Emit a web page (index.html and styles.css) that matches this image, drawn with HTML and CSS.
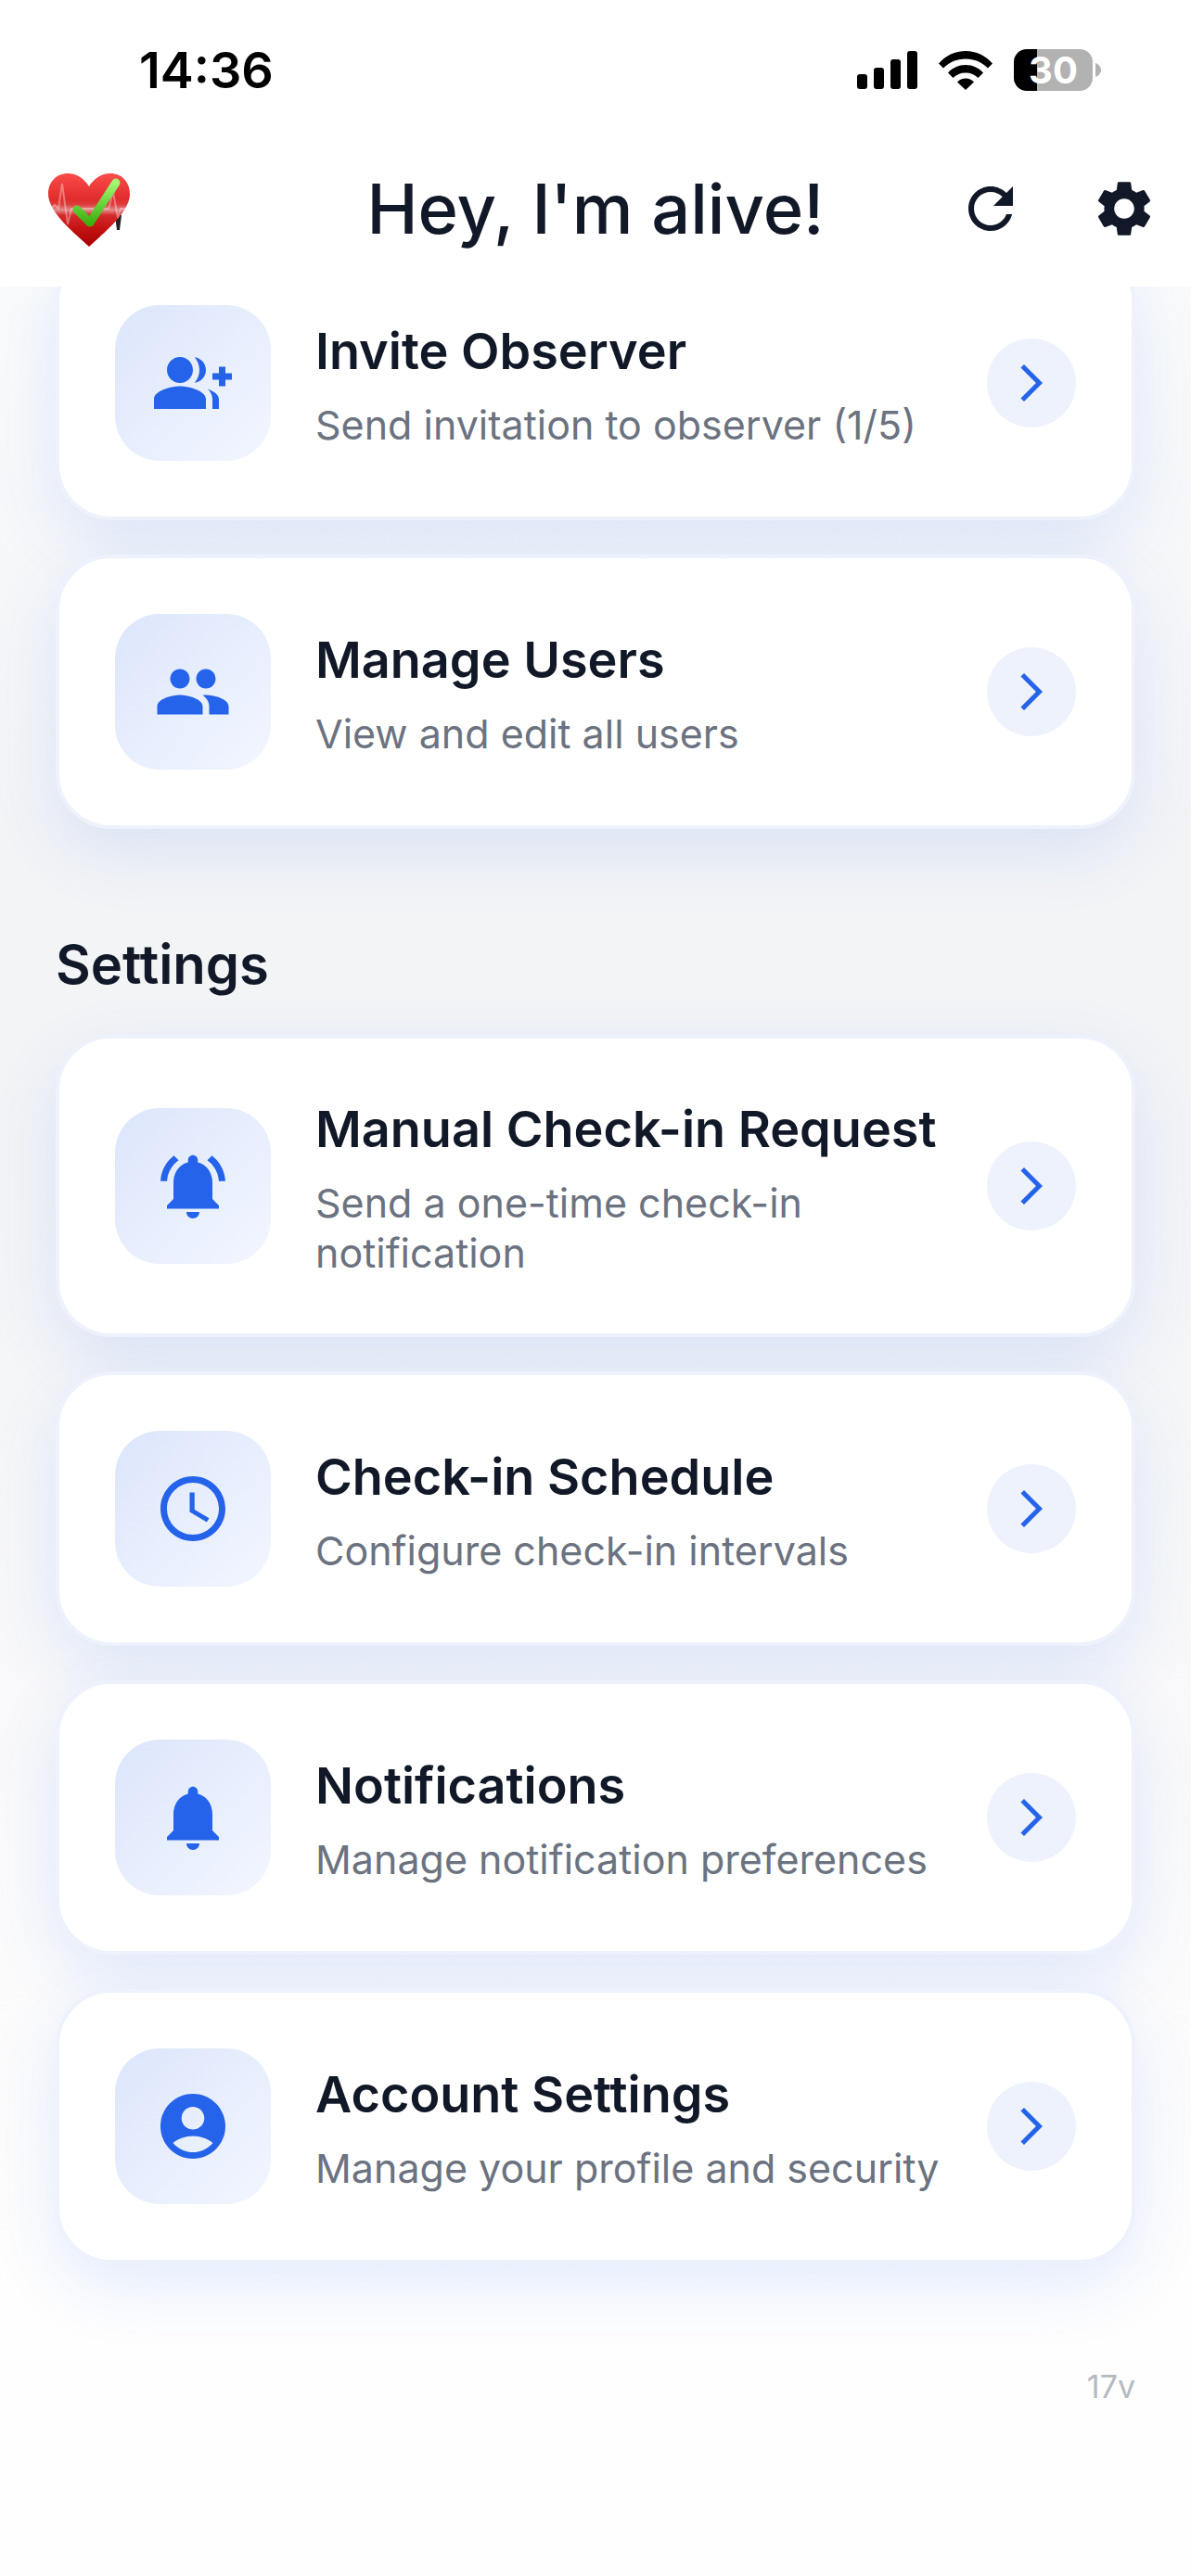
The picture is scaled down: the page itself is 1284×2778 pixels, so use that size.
FILE: index.html
```html
<!DOCTYPE html>
<html lang="en">
<head>
    <meta charset="UTF-8">
    <meta name="viewport" content="width=device-width, initial-scale=1.0">
    <title>Hey, I'm alive!</title>
    <link rel="stylesheet" href="styles.css">
</head>
<body>
    <!-- Icons shared by the cards -->
    <svg class="sprite" aria-hidden="true">
        <symbol id="chevron" viewBox="0 0 24 24">
            <path d="M6.23 20.23 8 22l10-10L8 2 6.23 3.77 14.46 12z"/>
        </symbol>
    </svg>

    <header class="header">
        <div class="status-bar">
            <span class="time">14:36</span>
            <div class="status-icons">
                <svg class="signal" viewBox="0 0 65 41" aria-hidden="true">
                    <rect x="0" y="25" width="11" height="16" rx="3"/>
                    <rect x="18" y="18" width="11" height="23" rx="3"/>
                    <rect x="36" y="9" width="11" height="32" rx="3"/>
                    <rect x="54" y="0" width="11" height="41" rx="3"/>
                </svg>
                <svg class="wifi" viewBox="0 0 58 42" aria-hidden="true">
                    <path d="M0 13.5C7.5 5 17.5 0 29 0s21.5 5 29 13.5l-5 5C46.500 12 38.500 8.500 29 8.500S11.500 12 5 18.500z"/>
                    <path d="M10 23.500C15 18 21.500 15 29 15s14 3 19 8.500l-5.500 5.500C39 25.500 34.500 23.500 29 23.500s-10 2-13.500 5.500z"/>
                    <path d="M20 33.500c2.500-2.500 5.500-4 9-4s6.500 1.500 9 4L29 42z"/>
                </svg>
                <div class="battery">
                    <span class="battery-level">30</span>
                    <svg class="battery-tip" viewBox="0 0 6 15" aria-hidden="true"><path d="M0 0c3.500 1.500 6 4 6 7.500S3.500 13.500 0 15z"/></svg>
                </div>
            </div>
        </div>

        <div class="app-bar">
            <svg class="logo" viewBox="0 0 96 96" role="img" aria-label="Logo">
                <defs>
                    <linearGradient id="heart" x1="0" y1="0" x2="0" y2="1">
                        <stop offset="0" stop-color="#fa4d4a"/>
                        <stop offset="0.35" stop-color="#e02c2c"/>
                        <stop offset="0.42" stop-color="#df3a3a"/>
                        <stop offset="0.5" stop-color="#e58a8a"/>
                        <stop offset="0.57" stop-color="#d42a2a"/>
                        <stop offset="0.75" stop-color="#c41212"/>
                        <stop offset="1" stop-color="#a80000"/>
                    </linearGradient>
                    <linearGradient id="check" x1="0" y1="0" x2="0" y2="1">
                        <stop offset="0" stop-color="#a2f871"/>
                        <stop offset="1" stop-color="#3db010"/>
                    </linearGradient>
                </defs>
                <path fill="#222" d="M76 55h7l-2 16h-3z"/>
                <path fill="url(#heart)" d="M48 89C32 74 4 52 4 32 4 19 13 10 25 10c10 0 18 6 23 14 5-8 13-14 23-14 12 0 21 9 21 22 0 20-28 42-44 57z"/>
                <path class="pulse" d="M7 48l4-4 4 4 4-27 6 44 4-17h40l5-18 5 28 3-10h8"/>
                <path fill="none" stroke="url(#check)" stroke-width="9" stroke-linecap="round" stroke-linejoin="round" d="M35 49l14 14 28-43"/>
            </svg>
            <h1 class="title">Hey, I'm alive!</h1>
            <button class="icon-button" type="button" aria-label="Refresh">
                <svg viewBox="0 0 24 24"><path d="M17.65 6.35C16.2 4.9 14.21 4 12 4c-4.42 0-7.99 3.58-7.99 8s3.57 8 7.99 8c3.73 0 6.84-2.55 7.73-6h-2.08c-.82 2.33-3.04 4-5.65 4-3.31 0-6-2.69-6-6s2.69-6 6-6c1.66 0 3.14.69 4.22 1.78L13 11h7V4l-2.35 2.35z"/></svg>
            </button>
            <button class="icon-button" type="button" aria-label="Settings">
                <svg viewBox="0 0 24 24"><path d="M19.14 12.94c.04-.3.06-.61.06-.94 0-.32-.02-.64-.07-.94l2.03-1.58c.18-.14.23-.41.12-.61l-1.92-3.32c-.12-.22-.37-.29-.59-.22l-2.39.96c-.5-.38-1.03-.7-1.62-.94l-.36-2.54c-.04-.24-.24-.41-.48-.41h-3.84c-.24 0-.43.17-.47.41l-.36 2.54c-.59.24-1.13.57-1.62.94l-2.39-.96c-.22-.08-.47 0-.59.22L2.74 8.87c-.12.21-.08.47.12.61l2.03 1.58c-.05.3-.09.63-.09.94s.02.64.07.94l-2.03 1.58c-.18.14-.23.41-.12.61l1.92 3.32c.12.22.37.29.59.22l2.39-.96c.5.38 1.03.7 1.62.94l.36 2.54c.05.24.24.41.48.41h3.84c.24 0 .44-.17.47-.41l.36-2.54c.59-.24 1.13-.56 1.62-.94l2.39.96c.22.08.47 0 .59-.22l1.92-3.32c.12-.22.07-.47-.12-.61l-2.01-1.58zM12 15.6c-1.98 0-3.6-1.62-3.6-3.6s1.62-3.6 3.6-3.6 3.6 1.62 3.6 3.6-1.62 3.6-3.6 3.6z"/></svg>
            </button>
        </div>
    </header>

    <main class="content">
        <nav class="cards">
            <a class="card" href="#invite">
                <span class="card-icon">
                    <svg viewBox="0 0 24 24"><path d="M22 9V7h-2v2h-2v2h2v2h2v-2h2V9h-2zM8 12c2.21 0 4-1.79 4-4s-1.79-4-4-4-4 1.79-4 4 1.79 4 4 4zm0 1c-2.67 0-8 1.34-8 4v3h16v-3c0-2.66-5.33-4-8-4zm4.51-8.95C13.43 5.11 14 6.49 14 8s-.57 2.89-1.49 3.95C14.47 11.7 16 10.04 16 8s-1.53-3.7-3.49-3.95zm4.02 9.78C17.42 14.66 18 15.7 18 17v3h2v-3c0-1.45-1.59-2.51-3.47-3.17z"/></svg>
                </span>
                <span class="card-text">
                    <span class="card-title">Invite Observer</span>
                    <span class="card-subtitle">Send invitation to observer (1/5)</span>
                </span>
                <span class="card-arrow"><svg><use href="#chevron"/></svg></span>
            </a>
            <a class="card" href="#users">
                <span class="card-icon">
                    <svg viewBox="0 0 24 24"><path d="M16 11c1.66 0 2.99-1.34 2.99-3S17.66 5 16 5c-1.66 0-3 1.34-3 3s1.34 3 3 3zm-8 0c1.66 0 2.99-1.34 2.99-3S9.66 5 8 5C6.34 5 5 6.34 5 8s1.34 3 3 3zm0 2c-2.33 0-7 1.17-7 3.5V19h14v-2.5c0-2.33-4.67-3.5-7-3.5zm8 0c-.29 0-.62.02-.97.05 1.16.84 1.97 1.97 1.97 3.45V19h6v-2.5c0-2.33-4.67-3.5-7-3.5z"/></svg>
                </span>
                <span class="card-text">
                    <span class="card-title">Manage Users</span>
                    <span class="card-subtitle">View and edit all users</span>
                </span>
                <span class="card-arrow"><svg><use href="#chevron"/></svg></span>
            </a>
        </nav>

        <h2 class="section-title">Settings</h2>

        <nav class="cards">
            <a class="card" href="#manual">
                <span class="card-icon">
                    <svg viewBox="0 0 24 24"><path d="M7.58 4.08L6.15 2.65C3.75 4.48 2.17 7.3 2.03 10.5h2c.15-2.65 1.51-4.97 3.55-6.42zm12.39 6.42h2c-.15-3.2-1.73-6.02-4.12-7.85l-1.42 1.43c2.02 1.45 3.39 3.77 3.54 6.42zM18 11c0-3.07-1.64-5.64-4.5-6.32V4c0-.83-.67-1.5-1.5-1.5s-1.5.67-1.5 1.5v.68C7.63 5.36 6 7.92 6 11v5l-2 2v1h16v-1l-2-2v-5zm-6 11c.14 0 .27-.01.4-.04.65-.14 1.18-.58 1.44-1.18.1-.24.15-.5.15-.78h-4c.01 1.1.9 2 2.01 2z"/></svg>
                </span>
                <span class="card-text">
                    <span class="card-title">Manual Check-in Request</span>
                    <span class="card-subtitle">Send a one-time check-in notification</span>
                </span>
                <span class="card-arrow"><svg><use href="#chevron"/></svg></span>
            </a>
            <a class="card" href="#schedule">
                <span class="card-icon">
                    <svg viewBox="0 0 24 24"><path d="M11.99 2C6.47 2 2 6.48 2 12s4.47 10 9.99 10C17.52 22 22 17.52 22 12S17.52 2 11.99 2zM12 20c-4.42 0-8-3.58-8-8s3.58-8 8-8 8 3.58 8 8-3.58 8-8 8zM12.5 7H11v6l5.25 3.15.75-1.23-4.5-2.67z"/></svg>
                </span>
                <span class="card-text">
                    <span class="card-title">Check-in Schedule</span>
                    <span class="card-subtitle">Configure check-in intervals</span>
                </span>
                <span class="card-arrow"><svg><use href="#chevron"/></svg></span>
            </a>
            <a class="card" href="#notifications">
                <span class="card-icon">
                    <svg viewBox="0 0 24 24"><path d="M12 22c1.1 0 2-.9 2-2h-4c0 1.1.89 2 2 2zm6-6v-5c0-3.07-1.64-5.64-4.5-6.32V4c0-.83-.67-1.5-1.5-1.5s-1.5.67-1.5 1.5v.68C7.63 5.36 6 7.92 6 11v5l-2 2v1h16v-1l-2-2z"/></svg>
                </span>
                <span class="card-text">
                    <span class="card-title">Notifications</span>
                    <span class="card-subtitle">Manage notification preferences</span>
                </span>
                <span class="card-arrow"><svg><use href="#chevron"/></svg></span>
            </a>
            <a class="card" href="#account">
                <span class="card-icon">
                    <svg viewBox="0 0 24 24"><path d="M12 2C6.48 2 2 6.48 2 12s4.48 10 10 10 10-4.48 10-10S17.52 2 12 2zm0 4c1.93 0 3.5 1.57 3.5 3.5S13.93 13 12 13s-3.5-1.57-3.5-3.5S10.07 6 12 6zm0 14c-2.03 0-4.43-.82-6.14-2.88C7.55 15.8 9.68 15 12 15s4.45.8 6.14 2.12C16.43 19.18 14.03 20 12 20z"/></svg>
                </span>
                <span class="card-text">
                    <span class="card-title">Account Settings</span>
                    <span class="card-subtitle">Manage your profile and security</span>
                </span>
                <span class="card-arrow"><svg><use href="#chevron"/></svg></span>
            </a>
        </nav>

        <p class="version">17v</p>
    </main>
</body>
</html>
```

FILE: styles.css
```css
* {
    box-sizing: border-box;
}

body {
    display: flex;
    flex-direction: column;
    min-height: 100vh;
    margin: 0;
    font-family: Inter, "Liberation Sans", sans-serif;
    color: #111827;
    background: #fff;
}

.sprite {
    display: none;
}

/* Header stays above the scrolled list */
.header {
    position: sticky;
    top: 0;
    z-index: 1;
    background: #fff;
}

.status-bar {
    display: flex;
    justify-content: space-between;
    align-items: center;
    height: 141px;
    padding: 10px 97px 0 150px;
}

.time {
    font-size: 54px;
    font-weight: 600;
    line-height: 66px;
    color: #000;
}

.status-icons {
    display: flex;
    align-items: center;
    gap: 23px;
}

.signal {
    width: 65px;
    height: 41px;
}

.wifi {
    width: 58px;
    height: 42px;
}

.battery {
    display: flex;
    align-items: center;
    gap: 3px;
}

.battery-level {
    width: 85px;
    height: 45px;
    border-radius: 14px;
    background: linear-gradient(to right, #000 30%, #b2b2b2 30%);
    color: #fff;
    font-size: 40px;
    font-weight: 700;
    line-height: 45px;
    text-align: center;
}

.battery-tip {
    width: 6px;
    height: 15px;
    fill: #b2b2b2;
}

.app-bar {
    display: grid;
    grid-template-columns: 144px 144px 1fr 144px 144px;
    align-items: center;
    height: 168px;
}

.logo {
    width: 96px;
    height: 96px;
    margin-left: 48px;
}

.pulse {
    fill: none;
    stroke: #fff;
    stroke-opacity: 0.35;
    stroke-width: 2;
}

.title {
    grid-column: 3;
    margin: 0;
    font-size: 74px;
    font-weight: 500;
    text-align: center;
    white-space: nowrap;
}

.icon-button {
    display: flex;
    justify-content: center;
    align-items: center;
    height: 144px;
    padding: 0;
    border: none;
    background: none;
    cursor: pointer;
}

.icon-button svg {
    width: 72px;
    height: 72px;
    fill: #111827;
}

/* The list is scrolled a little, so the first card slides under the header */
.content {
    flex: 1;
    margin-top: -44px;
    padding: 0 60px;
    background: linear-gradient(to bottom, #fafbfc 0%, #f3f4f6 25%, #f3f4f6 40%, #fefefe 88%);
}

.cards {
    display: flex;
    flex-direction: column;
    gap: 37px;
}

.card {
    display: flex;
    align-items: center;
    gap: 48px;
    padding: 60px;
    border: 4px solid #edf2fd;
    border-radius: 60px;
    background: #fff;
    box-shadow: 0 24px 72px rgba(37, 99, 235, 0.12);
    color: inherit;
    text-decoration: none;
}

.card-icon {
    display: flex;
    flex: none;
    justify-content: center;
    align-items: center;
    width: 168px;
    height: 168px;
    border-radius: 48px;
    background: linear-gradient(135deg, #dce6fb, #f2f6ff);
}

.card-icon svg {
    width: 84px;
    height: 84px;
    fill: #2563eb;
}

.card-text {
    flex: 1;
}

.card-title {
    display: block;
    margin-bottom: 15px;
    font-size: 54px;
    font-weight: 600;
    line-height: 75px;
}

.card-subtitle {
    display: block;
    font-size: 43px;
    line-height: 54px;
    color: #6b7280;
}

.card-arrow {
    display: flex;
    flex: none;
    justify-content: center;
    align-items: center;
    width: 96px;
    height: 96px;
    border-radius: 50%;
    background: #edf2fd;
}

.card-arrow svg {
    width: 48px;
    height: 48px;
    fill: #2563eb;
}

.section-title {
    margin: 110px 0 40px;
    font-size: 58px;
    font-weight: 600;
    line-height: 72px;
}

.version {
    margin: 112px 0 60px;
    font-size: 34px;
    line-height: 42px;
    color: #b5b9c1;
    text-align: right;
}
```
